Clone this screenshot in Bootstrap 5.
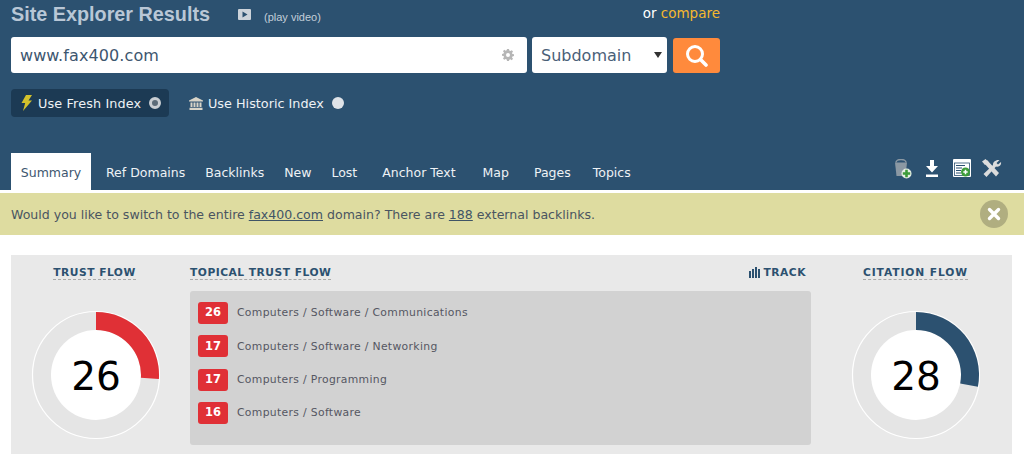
<!DOCTYPE html>
<html lang="en"><head><meta charset="utf-8"><title>Site Explorer Results</title>
<link href="https://cdn.jsdelivr.net/npm/bootstrap@5.3.0/dist/css/bootstrap.min.css" rel="stylesheet">
<style>
html,body{height:469px;overflow:hidden}
body{font-family:"DejaVu Sans",Verdana,sans-serif;background:#fff;color:#4a5560}
.hdr{background:#2c5170;height:190px;padding:0 11px 0 11px;position:relative}
.hdr-top{height:37px;width:709px}
.ttl{font:bold 19.8px/1 "Liberation Sans",Arial,sans-serif;color:#b9c7d6;margin:5px 0 0}
.vid{margin:9px 0 0 28px;display:block}
.play{font:11px/1 "Liberation Sans",Arial,sans-serif;color:#c3ced9;margin:12px 0 0 13px}
.cmp{font-size:13.5px;color:#fff;margin:3px 0 0 auto}
.cmp a{color:#f5b82e;text-decoration:none}
.srch{width:709px;height:37px}
.inp-wrap{width:516px;height:36px}
.inp-wrap .form-control{height:36px;border:0;border-radius:3px;font-size:16px;color:#3d566f;padding:0 9px;letter-spacing:.1px}
.gear{position:absolute;right:13px;top:12px}
.sel.form-select{width:135px;height:36px;margin-left:5px;border:0;border-radius:3px;font-size:16px;color:#4a6078;padding:2px 0 0 9px;background-size:8px 6px;background-position:right 5px center;background-image:url("data:image/svg+xml,%3Csvg xmlns='http://www.w3.org/2000/svg' viewBox='0 0 8 6'%3E%3Cpath d='M0 0h8L4 6z' fill='%23333'/%3E%3C/svg%3E")}
.go{width:47px;height:35px;margin:1px 0 0 6px;background:#ff8a3c;border:0;border-radius:3px;padding:0}
.opts{margin-top:15px;height:29px}
.opt{display:flex;align-items:center;height:28px;font-size:12.8px;color:#eef2f5;padding:0 8px 0 9px;border-radius:4px;white-space:nowrap}
.opt.on{background:#1c3a54;width:158px;padding-right:0}
.opt.on span{letter-spacing:.13px}
.opt.off{margin-left:11px}
.opt span{margin:1px 8px 0 5px}
.rd{width:12px;height:12px;border-radius:50%;background:#dfe3e8;display:block;flex:none}
.rd.chk{border:3px solid #c9ced3;background:#5b6b78}
.tabs{position:absolute;left:11px;right:0;bottom:0;height:37px;display:flex;align-items:flex-end;font-size:12.5px}
.tabs a{color:#eef2f5;text-decoration:none;height:37px;line-height:39px}
.tabs a.act{background:#fff;color:#3d566f;width:80px;text-align:center;margin-right:15px}
.tabs .g20{margin-left:20px}.tabs .g25{margin-left:25px}.tabs .g27{margin-left:27px}.tabs .g22{margin-left:22px}
.tool{position:absolute;display:block}
.strip{background:#dedca0;height:42px;margin-top:3px;padding:0 16px 0 11px;font-size:12.55px;color:#4a5560}
.strip a{color:#3f5466}
.msg{margin-top:2px}
.cls{width:28px;height:28px;border-radius:50%;background:#b0ae80;border:0;padding:0;display:flex;align-items:center;justify-content:center}
.pane{margin:20px 12px 0 11px;height:199px;background:#e9e9e9}
.lcol{width:170px}.mcol{width:621px;margin-left:9px}.rcol{width:192px;margin-left:9px}
.hd{font-size:10.7px;font-weight:bold;color:#2c5170;letter-spacing:.5px;border-bottom:1px dashed #a9a9a9;line-height:13px}
.hd.wide{letter-spacing:.9px}
.hdrow{height:36px;padding-top:11px;line-height:13px;display:flex;align-items:flex-start}
.hdrow.mid{justify-content:center}
.lcol .hdrow{padding-right:3px}
.rcol .hdrow{padding-right:1px}
.trk{font-size:10.7px;font-weight:bold;color:#2c5170;letter-spacing:.5px;line-height:13px;margin-right:5px}
.box{background:#d2d2d2;height:154px;border-radius:3px;padding:11px 8px}
.rowx{display:flex;align-items:center;height:22px;margin-bottom:11.3px;font-size:10.8px;letter-spacing:.33px;color:#555762}
.rowx span{margin-top:1px}
.scr{width:30px;height:22px;background:#e03036;color:#fff;border-radius:3px;font-weight:bold;font-size:11.5px;letter-spacing:0;display:flex;align-items:center;justify-content:center;margin-right:9px}
.gauge{display:block;margin-top:19px}
.gnum{font:39px "DejaVu Sans",Verdana,sans-serif;fill:#000}
</style></head><body>
<header class="hdr">
 <div class="hdr-top d-flex align-items-start">
  <h1 class="ttl">Site Explorer Results</h1>
  <svg class="vid" width="13" height="11" viewBox="0 0 13 11" aria-hidden="true"><rect width="13" height="11" rx="1" fill="#ccd3da"/><path d="M4.5 2.5v6l5-3z" fill="#2c5170"/></svg>
  <span class="play">(play video)</span>
  <span class="cmp">or <a href="#">compare</a></span>
 </div>
 <form class="srch d-flex align-items-start">
  <div class="inp-wrap position-relative">
   <input class="form-control" value="www.fax400.com" aria-label="URL">
   <svg class="gear" width="12" height="12" viewBox="0 0 12 12" aria-hidden="true"><path fill="#b6b6b6" fill-rule="evenodd" d="M5 0h2l.3 1.6 1.1.5L9.800 1.200 11 2.600l-1 1.300.4 1.100 1.600.300v1.800l-1.600.3-.4 1.100 1 1.300-1.200 1.400-1.400-.9-1.100.5L7 12H5l-.3-1.600-1.100-.5-1.400.9L1 9.400l1-1.300-.4-1.100L0 6.700V4.900l1.600-.3.4-1.100-1-1.300 1.200-1.400 1.400.9 1.100-.5zM6 4a2 2 0 1 0 0 4 2 2 0 0 0 0-4z"/></svg>
  </div>
  <select class="form-select sel" aria-label="Scope"><option>Subdomain</option></select>
  <button class="btn go d-flex align-items-center justify-content-center" type="button" aria-label="Search">
   <svg width="23" height="23" viewBox="0 0 23 23"><circle cx="10" cy="10" r="7.500" fill="none" stroke="#fff" stroke-width="3"/><path d="M15.500 15.500 21 21" stroke="#fff" stroke-width="3.600" stroke-linecap="round"/></svg>
  </button>
 </form>
 <div class="opts d-flex">
  <div class="opt on">
   <svg width="13" height="16" viewBox="0 0 13 16" aria-hidden="true"><path d="M6 0h6L8.500 5.500H12L3 16l2.200-8H1.500z" fill="#d3c22c"/></svg>
   <span>Use Fresh Index</span><i class="rd chk"></i>
  </div>
  <div class="opt off">
   <svg width="14" height="13" viewBox="0 0 14 13" aria-hidden="true"><path d="M7 0l7 3.500v1H0v-1zM1.500 5.500h2V10h-2zM4.500 5.500h2V10h-2zM7.500 5.500h2V10h-2zM10.500 5.500h2V10h-2zM.5 10.800h13V13H.5z" fill="#d8d4c8"/></svg>
   <span>Use Historic Index</span><i class="rd"></i>
  </div>
 </div>
 <nav class="tabs">
  <a class="act" href="#">Summary</a>
  <a href="#">Ref Domains</a>
  <a href="#" class="g20">Backlinks</a>
  <a href="#" class="g20">New</a>
  <a href="#" class="g20">Lost</a>
  <a href="#" class="g25">Anchor Text</a>
  <a href="#" class="g27">Map</a>
  <a href="#" class="g25">Pages</a>
  <a href="#" class="g22">Topics</a>
 </nav>
 <svg class="tool" style="left:893px;top:159px" width="19" height="20" viewBox="0 0 19 20" aria-hidden="true"><path d="M2 3.500h12L12.500 17h-9z" fill="#8b98a3"/><path d="M3 3.500a5 3 0 0 1 10 0" fill="none" stroke="#8b98a3" stroke-width="1.500"/><circle cx="13.500" cy="14.500" r="5" fill="#e8efe6"/><path d="M12.200 10.800h2.600v2.400h2.400v2.600h-2.400v2.400h-2.600v-2.400H9.800v-2.600h2.400z" fill="#3d9b3a"/></svg>
 <svg class="tool" style="left:925px;top:160px" width="14" height="17" viewBox="0 0 14 17" aria-hidden="true"><path d="M5 0h4v6h4L7 12.500 1 6h4zM1 14.500h12V17H1z" fill="#fff"/></svg>
 <svg class="tool" style="left:953px;top:159px" width="18" height="19" viewBox="0 0 18 19" aria-hidden="true"><rect width="18" height="18" rx="1" fill="#fff"/><rect x="1.500" y="4" width="15" height="12.500" fill="#fff" stroke="#2c5170" stroke-width=".8"/><path d="M3 6.500h9M3 9h6M3 11.500h5M3 14h5" stroke="#2c5170" stroke-width="1.200"/><circle cx="12.500" cy="13" r="4.500" fill="#3d9b3a"/><path d="M12.500 10.800v4.400M10.300 13h4.400" stroke="#fff" stroke-width="1.500"/></svg>
 <svg class="tool" style="left:982px;top:159px" width="20" height="19" viewBox="0 0 20 19" aria-hidden="true"><path d="M2 4l3-3 12 13-3 3.500z" fill="#dcdcdc"/><path d="M0 2.500 3.500 0l3 3L3 6z" fill="#dcdcdc"/><path d="M17.500 1l-3 3 1.500 1.500 3-2.500c.6 2.500-1.500 5.500-5 4.500L4.500 18 1.500 15 11 6C10.500 3 14 .3 17.500 1z" fill="#dcdcdc"/></svg>
</header>
<div class="strip d-flex align-items-center justify-content-between">
 <span class="msg">Would you like to switch to the entire <a href="#">fax400.com</a> domain? There are <a href="#">188</a> external backlinks.</span>
 <button class="cls" type="button" aria-label="Close"><svg width="14" height="14" viewBox="0 0 14 14"><path d="M2.500 2.500l9 9M11.500 2.500l-9 9" stroke="#fff" stroke-width="3.400" stroke-linecap="round"/></svg></button>
</div>
<main class="pane d-flex">
 <section class="lcol">
  <div class="hdrow mid"><span class="hd">TRUST FLOW</span></div>
  <svg class="gauge mx-auto" width="130" height="130" viewBox="-65 -65 130 130" role="img" aria-label="Trust Flow 26">
   <circle r="63.500" fill="#e5e5e5" stroke="#fff" stroke-width="1.200"/>
   <circle r="45" fill="#fff"/>
   <path d="M0-63A63 63 0 0 1 62.900 3.960L44.900 2.830A45 45 0 0 0 0-45z" fill="#e03036"/>
   <text class="gnum" text-anchor="middle" y="14.500">26</text>
  </svg>
 </section>
 <section class="mcol">
  <div class="hdrow justify-content-between"><span class="hd">TOPICAL TRUST FLOW</span>
   <span class="trk d-flex align-items-center"><svg class="me-1" width="11" height="11" viewBox="0 0 11 11" aria-hidden="true"><path d="M0 4h2v7H0zM3 2h2v9H3zM6 0h2v11H6zM9 2h2v9H9z" fill="#2c5170"/></svg>TRACK</span></div>
  <div class="box">
   <div class="rowx"><b class="scr">26</b><span>Computers / Software / Communications</span></div>
   <div class="rowx"><b class="scr">17</b><span>Computers / Software / Networking</span></div>
   <div class="rowx"><b class="scr">17</b><span>Computers / Programming</span></div>
   <div class="rowx"><b class="scr">16</b><span>Computers / Software</span></div>
  </div>
 </section>
 <section class="rcol">
  <div class="hdrow mid"><span class="hd wide">CITATION FLOW</span></div>
  <svg class="gauge mx-auto" width="130" height="130" viewBox="-65 -65 130 130" role="img" aria-label="Citation Flow 28">
   <circle r="63.500" fill="#e5e5e5" stroke="#fff" stroke-width="1.200"/>
   <circle r="45" fill="#fff"/>
   <path d="M0-63A63 63 0 0 1 61.900 11.800L44.200 8.430A45 45 0 0 0 0-45z" fill="#2c5170"/>
   <text class="gnum" text-anchor="middle" y="14.500">28</text>
  </svg>
 </section>
</main>
</body></html>
